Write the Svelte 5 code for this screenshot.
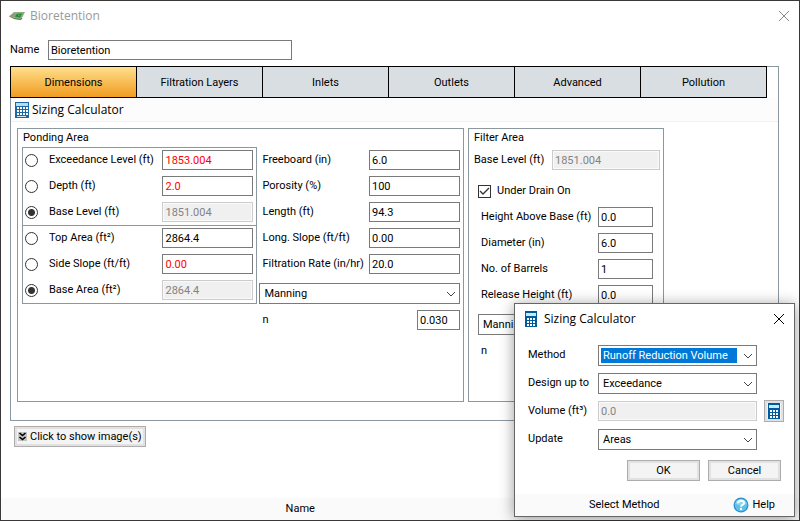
<script>
  const tabs = ["Dimensions", "Filtration Layers", "Inlets", "Outlets", "Advanced", "Pollution"];
  let current = $state("Dimensions");

  let levelMode = $state("base-level");
  let areaMode = $state("base-area");

  const levels = [
    { id: "exceedance", label: "Exceedance Level (ft)", value: "1853.004", derived: true },
    { id: "depth", label: "Depth (ft)", value: "2.0", derived: true },
    { id: "base-level", label: "Base Level (ft)", value: "1851.004" },
  ];

  const areas = [
    { id: "top-area", label: "Top Area (ft²)", value: "2864.4" },
    { id: "side-slope", label: "Side Slope (ft/ft)", value: "0.00", derived: true },
    { id: "base-area", label: "Base Area (ft²)", value: "2864.4" },
  ];

  const ponding = [
    { id: "freeboard", label: "Freeboard (in)", value: "6.0" },
    { id: "porosity", label: "Porosity (%)", value: "100" },
    { id: "length", label: "Length (ft)", value: "94.3" },
    { id: "long-slope", label: "Long. Slope (ft/ft)", value: "0.00" },
    { id: "rate", label: "Filtration Rate (in/hr)", value: "20.0" },
  ];

  const drain = [
    { id: "height", label: "Height Above Base (ft)", value: "0.0" },
    { id: "diameter", label: "Diameter (in)", value: "6.0" },
    { id: "barrels", label: "No. of Barrels", value: "1" },
    { id: "release", label: "Release Height (ft)", value: "0.0" },
  ];

  let underDrain = $state(true);
  let dialogOpen = $state(true);
</script>

{#snippet calculator()}
  <svg class="calc" width="12" height="16" viewBox="0 0 12 16" shape-rendering="crispEdges" aria-hidden="true">
    <rect width="12" height="16" fill="#005a9e" />
    <rect x="1" y="2" width="10" height="3" fill="#c5ebfb" />
    {#each [7, 10, 13] as y}
      {#each [2, 5, 8] as x}
        <rect {x} {y} width="2" height="2" fill="#fff" />
      {/each}
    {/each}
  </svg>
{/snippet}

{#snippet cross()}
  <svg width="10" height="10" viewBox="0 0 10 10" fill="none" stroke="currentColor" aria-hidden="true">
    <path d="M0 0L10 10M10 0L0 10" />
  </svg>
{/snippet}

{#snippet dropdown(id, label, options, selected = false)}
  <div class="select" class:selected>
    <select {id} aria-label={label}>
      {#each options as option}
        <option>{option}</option>
      {/each}
    </select>
    <svg width="10" height="6" viewBox="0 0 10 6" fill="none" stroke="#444" aria-hidden="true">
      <path d="M1 1L5 5L9 1" />
    </svg>
  </div>
{/snippet}

{#snippet choice(row, group, checked, pick)}
  <div class="choice">
    <input type="radio" name={group} id="use-{row.id}" {checked} onchange={pick} />
    <label for="use-{row.id}">{row.label}</label>
    <input
      type="text"
      class:derived={row.derived}
      aria-label={row.label}
      value={row.value}
      disabled={checked}
    />
  </div>
{/snippet}

<div class="window">
  <header class="titlebar">
    <svg class="logo" width="16" height="10" viewBox="0 0 16 10" aria-hidden="true">
      <path d="M0 5.500L5 1L16 1L12 9L5 8Z" fill="#a3a790" />
      <path d="M0 5.500L5 2L5 8Z" fill="#a0917f" />
      <path d="M6 2L15 1.500L11.500 8L4 6Z" fill="#6fb566" />
      <path d="M8 3L13 2.500L11 6.500L6 5.500Z" fill="#1f8a3b" />
      <path d="M9 4L11 3.500L10 5Z" fill="#5fd07a" />
      <path d="M5 7.500L12 8.500L13 7" fill="none" stroke="#66755c" />
    </svg>
    <h1>Bioretention</h1>
    <button class="close" aria-label="Close">{@render cross()}</button>
  </header>

  <div class="name">
    <label for="name">Name</label>
    <input id="name" type="text" value="Bioretention" />
  </div>

  <main>
    <nav>
      {#each tabs as tab}
        <button class="tab" class:current={tab === current} onclick={() => (current = tab)}>{tab}</button>
      {/each}
    </nav>

    <div class="toolbar">
      <button class="tool" onclick={() => (dialogOpen = true)}>
        <svg width="14" height="16" viewBox="0 0 14 16" shape-rendering="crispEdges" aria-hidden="true">
          <rect width="14" height="16" fill="#1d68a3" />
          <rect x="1" y="1" width="12" height="3" fill="#b5dcf1" />
          {#each [5, 8, 11] as y}
            {#each [2, 5, 8, 11] as x}
              <rect {x} {y} width="2" height="2" fill="#fff" />
            {/each}
          {/each}
          <rect x="2" y="14" width="9" height="1" fill="#d5e6f2" />
        </svg>
        Sizing Calculator
      </button>
    </div>

    <div class="groups">
      <section class="group ponding">
        <h2>Ponding Area</h2>
        <div class="columns">
          <div class="choices">
            <div class="block">
              {#each levels as row}
                {@render choice(row, "level", levelMode === row.id, () => (levelMode = row.id))}
              {/each}
            </div>
            <div class="block">
              {#each areas as row}
                {@render choice(row, "area", areaMode === row.id, () => (areaMode = row.id))}
              {/each}
            </div>
          </div>
          <div class="values">
            {#each ponding as row}
              <div class="field">
                <label for={row.id}>{row.label}</label>
                <input id={row.id} type="text" value={row.value} />
              </div>
            {/each}
            {@render dropdown("ponding-friction", "Friction", ["Manning", "Colebrook-White"])}
            <div class="field short">
              <label for="ponding-n">n</label>
              <input id="ponding-n" type="text" value="0.030" />
            </div>
          </div>
        </div>
      </section>

      <section class="group filter">
        <h2>Filter Area</h2>
        <div class="field level">
          <label for="filter-level">Base Level (ft)</label>
          <input id="filter-level" type="text" value="1851.004" disabled />
        </div>
        <div class="check">
          <input id="under-drain" type="checkbox" bind:checked={underDrain} />
          <label for="under-drain">Under Drain On</label>
          <svg width="11" height="9" viewBox="0 0 11 9" fill="none" stroke="#333" aria-hidden="true" class:off={!underDrain}>
            <path d="M1 4L4 7L10 1" stroke-width="1.3" />
          </svg>
        </div>
        <div class="drain">
          {#each drain as row}
            <div class="field">
              <label for={row.id}>{row.label}</label>
              <input id={row.id} type="text" value={row.value} />
            </div>
          {/each}
          {@render dropdown("drain-friction", "Friction", ["Manning", "Colebrook-White"])}
          <div class="field">
            <label for="drain-n">n</label>
            <input id="drain-n" type="text" value="0.015" />
          </div>
        </div>
      </section>
    </div>
  </main>

  <button class="button images">
    <svg width="9" height="9" viewBox="0 0 9 9" aria-hidden="true">
      <rect width="9" height="9" fill="#c4c4c4" />
      <path d="M1.500 1L4.500 3.500L7.500 1M1.500 5L4.500 7.500L7.500 5" fill="none" stroke="#000" stroke-width="1.600" />
    </svg>
    Click to show image(s)
  </button>

  <footer class="status"><span>Name</span></footer>

  {#if dialogOpen}
    <div class="dialog" role="dialog" aria-labelledby="dialog-title">
      <header>
        {@render calculator()}
        <h1 id="dialog-title">Sizing Calculator</h1>
        <button class="close" aria-label="Close dialog" onclick={() => (dialogOpen = false)}>{@render cross()}</button>
      </header>
      <div class="form">
        <label for="method">Method</label>
        {@render dropdown("method", "Method", ["Runoff Reduction Volume", "Quick Storage Estimate"], true)}
        <label for="design">Design up to</label>
        {@render dropdown("design", "Design up to", ["Exceedance", "Freeboard"])}
        <label for="volume">Volume (ft³)</label>
        <input id="volume" type="text" value="0.0" disabled />
        <button class="button calculate" aria-label="Calculate volume">{@render calculator()}</button>
        <label for="update">Update</label>
        {@render dropdown("update", "Update", ["Areas", "Depth"])}
      </div>
      <div class="actions">
        <button class="button" onclick={() => (dialogOpen = false)}>OK</button>
        <button class="button" onclick={() => (dialogOpen = false)}>Cancel</button>
      </div>
      <footer>
        <span>Select Method</span>
        <a href="#help">
          <svg width="16" height="16" viewBox="0 0 16 16" aria-hidden="true">
            <circle cx="8" cy="8" r="7.500" fill="#2a93cf" />
            <circle cx="8" cy="8" r="6.300" fill="#5fc0ea" />
            <path d="M2.500 7A5.600 5.600 0 0 1 13.500 7Q8 9 2.500 7Z" fill="#8ed6f4" />
            <path d="M5 6.200Q5.200 3.800 8 3.800Q11 3.800 11 6.100Q11 7.500 9.300 8.100Q8 8.600 8 9.800" fill="none" stroke="#fff" stroke-width="1.900" />
            <circle cx="8" cy="12" r="1.200" fill="#fff" />
          </svg>
          Help
        </a>
      </footer>
    </div>
  {/if}
</div>

<style>
  :global(body) {
    background: #fff;
  }

  .window, .window button, .window input, .window select {
    font-family: Roboto, "Liberation Sans", sans-serif;
    font-size: 11px;
    color: #000;
  }

  .window {
    box-sizing: border-box;
    min-height: 100vh;
    border: 1px solid #3a3838;
    position: relative;
    display: flex;
    flex-direction: column;
    line-height: 16px;
  }

  .window * {
    box-sizing: border-box;
  }

  h1, h2 {
    margin: 0;
    font-size: 11px;
    font-weight: normal;
  }

  h1, .window .tool {
    font-family: "Open Sans", "Noto Sans", sans-serif;
    font-size: 12px;
  }

  label {
    white-space: nowrap;
  }

  .titlebar {
    height: 29px;
    padding: 0 10px 0 8px;
    display: flex;
    align-items: center;
    gap: 5px;
  }

  .titlebar h1 {
    color: #999;
  }

  .close {
    margin-left: auto;
    padding: 0;
    border: none;
    background: none;
    display: flex;
  }

  .window .titlebar .close {
    color: #888;
  }

  input[type="text"] {
    width: 100%;
    height: 20px;
    padding: 0 2px;
    border: 1px solid #7a7a7a;
    border-radius: 0;
    background: #fff;
  }

  .window input.derived {
    color: #f00;
  }

  .window input[type="text"]:disabled {
    color: #838383;
    border-color: #ccc;
    background: #f0f0f0;
    box-shadow: inset 0 0 0 1px #fafafa;
  }

  .name {
    padding: 10px 9px 6px;
    display: grid;
    grid-template-columns: 38px minmax(0, 244px);
    align-items: center;
  }

  main {
    margin: 0 20px 0 9px;
    border: 1px solid #8b989f;
  }

  nav {
    display: flex;
    margin: -1px -1px 0;
    padding-right: 12px;
  }

  .tab {
    flex: 1;
    height: 32px;
    padding: 0;
    border: 1px solid #000;
    border-right: none;
    background: #d9dee2;
  }

  .tab:last-child {
    border-right: 1px solid #000;
  }

  .tab.current {
    background: linear-gradient(#ffdf8c, #f09c20);
  }

  .toolbar {
    height: 24px;
    padding-left: 4px;
    border-bottom: 1px solid #f0f0f0;
    background: #fcfcfc;
    display: flex;
    align-items: center;
  }

  .tool {
    padding: 0;
    border: none;
    background: none;
    display: flex;
    align-items: center;
    gap: 3px;
  }

  .groups {
    padding: 6px 114px 18px 6px;
    display: grid;
    grid-template-columns: minmax(0, 447fr) minmax(0, 196fr);
    gap: 4px;
  }

  .group {
    min-height: 274px;
    border: 1px solid #8b989f;
  }

  .group h2 {
    height: 18px;
    line-height: 18px;
  }

  .ponding {
    padding: 0 3px 0 4px;
  }

  .ponding h2 {
    padding-left: 1px;
  }

  .filter {
    padding: 0 3px 0 5px;
  }

  .columns {
    display: grid;
    grid-template-columns: minmax(0, 236fr) minmax(0, 201fr);
    align-items: start;
    gap: 2px;
  }

  .choices {
    border: 1px solid #8b989f;
  }

  .block {
    padding: 2px 3px 3px 2px;
    display: grid;
    gap: 6px;
  }

  .block + .block {
    border-top: 1px solid #8b989f;
  }

  .choice {
    display: grid;
    grid-template-columns: 24px 1fr 91px;
    align-items: center;
  }

  input[type="radio"], input[type="checkbox"] {
    appearance: none;
    width: 13px;
    height: 13px;
    margin: 0;
    border: 1px solid #333;
    background: #fff;
  }

  input[type="radio"] {
    border-radius: 50%;
  }

  input[type="radio"]:checked {
    background: radial-gradient(circle, #333 3px, #fff 4px);
  }

  .values {
    padding-top: 3px;
    display: grid;
    gap: 6px;
  }

  .field {
    display: grid;
    grid-template-columns: 1fr 91px;
    align-items: center;
  }

  .values .field {
    padding-left: 3px;
  }

  .values .select {
    margin-top: 3px;
  }

  .values .field.short {
    grid-template-columns: 1fr 43px;
  }

  .field.level {
    margin-top: 3px;
    grid-template-columns: 1fr 108px;
  }

  .check {
    margin: 13px 0 8px 4px;
    position: relative;
    display: flex;
    align-items: center;
    gap: 6px;
  }

  .check svg {
    position: absolute;
    left: 1px;
    top: 4px;
    pointer-events: none;
  }

  .check svg.off {
    display: none;
  }

  .drain {
    padding: 0 7px 0 4px;
    display: grid;
    gap: 6px;
  }

  .drain .field {
    padding-left: 3px;
    grid-template-columns: 1fr 55px;
  }

  .drain .select {
    margin-top: 3px;
  }

  .select {
    height: 21px;
    position: relative;
  }

  select {
    appearance: none;
    width: 100%;
    height: 100%;
    padding: 2px 19px 2px 2px;
    border: 1px solid #7a7a7a;
    border-radius: 0;
    background: #fff;
    text-indent: 2px;
  }

  .window .selected select {
    color: #fff;
    background: #0078d7 content-box;
  }

  .select svg {
    position: absolute;
    right: 4px;
    top: 8px;
    pointer-events: none;
  }

  .button {
    height: 21px;
    padding: 0;
    border: 1px solid #adadad;
    background: #f4f4f4;
    box-shadow: inset 0 0 0 2px #e1e1e1;
    display: flex;
    align-items: center;
    justify-content: center;
  }

  .images {
    margin: 5px 0 0 13px;
    padding: 0 3px;
    align-self: flex-start;
    gap: 3px;
  }

  .status {
    height: 22px;
    margin-top: auto;
    padding-right: 25%;
    background: #fafafa;
    text-align: center;
    line-height: 22px;
  }

  .dialog {
    width: 281px;
    position: absolute;
    right: 4px;
    bottom: 3px;
    border: 1px solid #666;
    background: #fff;
    box-shadow: 0 2px 14px rgba(0, 0, 0, 0.4);
  }

  .dialog header {
    height: 29px;
    padding: 0 10px;
    display: flex;
    align-items: center;
    gap: 7px;
  }

  .form {
    padding: 11px 10px 0 13px;
    display: grid;
    grid-template-columns: 70px minmax(0, 1fr) 20px;
    grid-auto-rows: 22px;
    row-gap: 6px;
    align-items: center;
  }

  .form label {
    grid-column: 1;
  }

  .form .select, .form input {
    grid-column: 2;
    width: auto;
    margin-right: 7px;
  }

  .calculate {
    height: 22px;
  }

  .actions {
    padding: 10px 13px 13px;
    display: flex;
    justify-content: flex-end;
    gap: 8px;
  }

  .actions .button {
    width: 73px;
  }

  .dialog footer {
    height: 22px;
    padding-right: 19px;
    background: #fafafa;
    display: flex;
    align-items: center;
  }

  .dialog footer span {
    flex: 1;
    text-align: center;
  }

  .dialog footer a {
    color: #000;
    text-decoration: none;
    display: flex;
    align-items: center;
    gap: 3px;
  }
</style>
